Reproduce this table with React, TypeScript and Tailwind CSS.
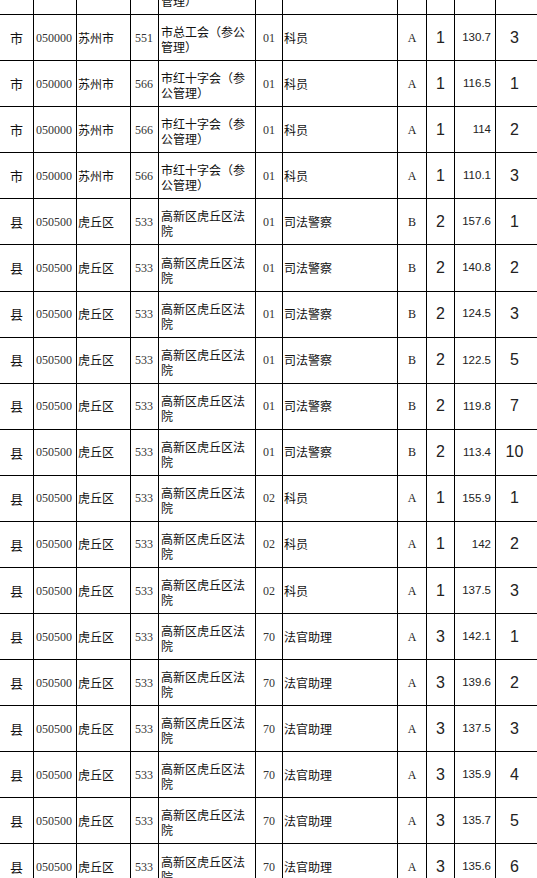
import React from "react";

type Row = [string, string, string, string, string, string, string, string, string, string, string];

const rows: Row[] = [
  ["", "", "", "", "市总工会（参公管理）", "", "", "", "", "", ""],
  ["市", "050000", "苏州市", "551", "市总工会（参公管理）", "01", "科员", "A", "1", "130.7", "3"],
  ["市", "050000", "苏州市", "566", "市红十字会（参公管理）", "01", "科员", "A", "1", "116.5", "1"],
  ["市", "050000", "苏州市", "566", "市红十字会（参公管理）", "01", "科员", "A", "1", "114", "2"],
  ["市", "050000", "苏州市", "566", "市红十字会（参公管理）", "01", "科员", "A", "1", "110.1", "3"],
  ["县", "050500", "虎丘区", "533", "高新区虎丘区法院", "01", "司法警察", "B", "2", "157.6", "1"],
  ["县", "050500", "虎丘区", "533", "高新区虎丘区法院", "01", "司法警察", "B", "2", "140.8", "2"],
  ["县", "050500", "虎丘区", "533", "高新区虎丘区法院", "01", "司法警察", "B", "2", "124.5", "3"],
  ["县", "050500", "虎丘区", "533", "高新区虎丘区法院", "01", "司法警察", "B", "2", "122.5", "5"],
  ["县", "050500", "虎丘区", "533", "高新区虎丘区法院", "01", "司法警察", "B", "2", "119.8", "7"],
  ["县", "050500", "虎丘区", "533", "高新区虎丘区法院", "01", "司法警察", "B", "2", "113.4", "10"],
  ["县", "050500", "虎丘区", "533", "高新区虎丘区法院", "02", "科员", "A", "1", "155.9", "1"],
  ["县", "050500", "虎丘区", "533", "高新区虎丘区法院", "02", "科员", "A", "1", "142", "2"],
  ["县", "050500", "虎丘区", "533", "高新区虎丘区法院", "02", "科员", "A", "1", "137.5", "3"],
  ["县", "050500", "虎丘区", "533", "高新区虎丘区法院", "70", "法官助理", "A", "3", "142.1", "1"],
  ["县", "050500", "虎丘区", "533", "高新区虎丘区法院", "70", "法官助理", "A", "3", "139.6", "2"],
  ["县", "050500", "虎丘区", "533", "高新区虎丘区法院", "70", "法官助理", "A", "3", "137.5", "3"],
  ["县", "050500", "虎丘区", "533", "高新区虎丘区法院", "70", "法官助理", "A", "3", "135.9", "4"],
  ["县", "050500", "虎丘区", "533", "高新区虎丘区法院", "70", "法官助理", "A", "3", "135.7", "5"],
  ["县", "050500", "虎丘区", "533", "高新区虎丘区法院", "70", "法官助理", "A", "3", "135.6", "6"],
];

const cjk = "font-['Noto_Sans_CJK_SC',sans-serif]";
const serif = "font-['Liberation_Serif','Noto_Sans_CJK_SC',serif]";
const sans = "font-['Liberation_Sans',Arial,sans-serif]";

function TableRow({ r }: { r: Row }) {
  return (
    <div className="grid grid-cols-[34px_43px_54px_28px_97px_27px_115px_29px_28px_41px_41px] h-[46.08px] border-b border-black">
      <div className={`flex items-center justify-center border-r border-black text-[13px] text-[#111] ${cjk}`}>{r[0]}</div>
      <div className={`flex items-center pl-[2px] border-r border-black text-[12px] text-[#333] ${serif}`}>{r[1]}</div>
      <div className={`flex items-center pl-[1px] border-r border-black text-[12px] text-[#111] ${cjk}`}>{r[2]}</div>
      <div className={`flex items-center justify-end pr-[5px] border-r border-black text-[12px] text-[#333] ${serif}`}>{r[3]}</div>
      <div className={`flex items-center pl-[2px] pr-[1px] pt-[3px] border-r border-black text-[12px] leading-[15px] text-[#111] ${cjk}`}>
        <span>{r[4]}</span>
      </div>
      <div className={`flex items-center justify-center border-r border-black text-[12px] text-[#333] ${serif}`}>{r[5]}</div>
      <div className={`flex items-center pl-[1px] border-r border-black text-[12px] text-[#111] ${cjk}`}>{r[6]}</div>
      <div className={`flex items-center justify-center border-r border-black text-[12px] text-[#222] ${serif}`}>{r[7]}</div>
      <div className={`flex items-center justify-center border-r border-black text-[16px] text-[#222] ${sans}`}>{r[8]}</div>
      <div className={`flex items-center justify-end pr-[4px] border-r border-black text-[11.5px] text-[#222] ${sans}`}>{r[9]}</div>
      <div className={`flex items-center justify-center pr-[4px] text-[16px] text-[#222] ${sans}`}>{r[10]}</div>
    </div>
  );
}

export default function App() {
  return (
    <div className="w-[537px] h-[878px] overflow-hidden bg-white opacity-[0.995]">
      <div className="-mt-[31px]">
        {rows.map((r, i) => (
          <TableRow key={i} r={r} />
        ))}
      </div>
    </div>
  );
}
